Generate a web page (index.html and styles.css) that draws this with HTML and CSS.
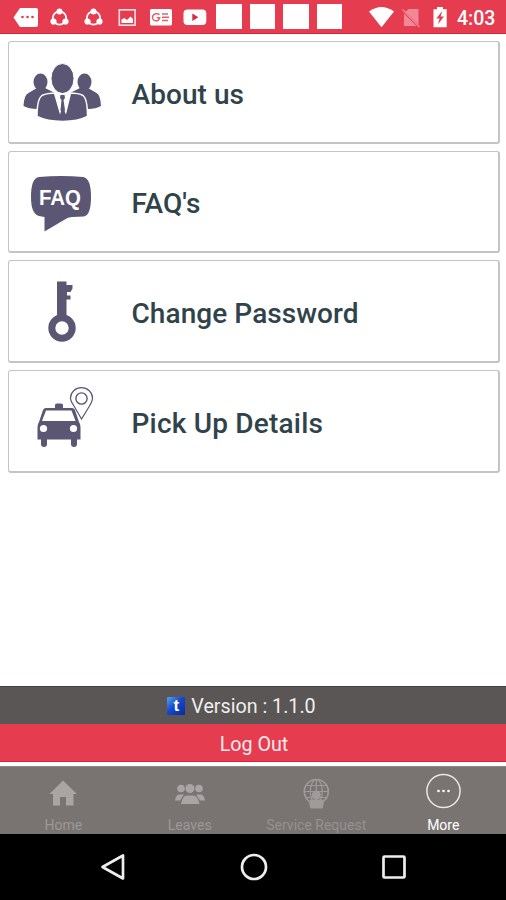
FILE: index.html
```
<!DOCTYPE html>
<html lang="en">
<head>
<meta charset="utf-8">
<title>More</title>
<link rel="stylesheet" href="styles.css">
</head>
<body>
<header class="status">
  <svg width="44" height="34" viewBox="0 0 44 34"><path fill="#fff" d="M20 8H36Q38 8 38 10V25Q38 27 36 27H20L13.5 17.5Z"/><g fill="#e63c50"><circle cx="22.5" cy="17" r="1.3"/><circle cx="27.5" cy="17" r="1.3"/><circle cx="32.5" cy="17" r="1.3"/></g></svg>
  <svg width="33" height="34" viewBox="44 0 33 34"><circle cx="59.5" cy="18" r="6.7" fill="none" stroke="#fff" stroke-width="1.8"/><g fill="#fff"><circle cx="59.5" cy="11.5" r="3"/><circle cx="53.5" cy="21.5" r="3.1"/><circle cx="65.5" cy="21.5" r="3.1"/></g></svg>
  <svg width="34" height="34" viewBox="77 0 34 34"><circle cx="93.5" cy="18" r="6.7" fill="none" stroke="#fff" stroke-width="1.8"/><g fill="#fff"><circle cx="93.5" cy="11.5" r="3"/><circle cx="87.5" cy="21.5" r="3.1"/><circle cx="99.5" cy="21.5" r="3.1"/></g></svg>
  <svg width="32" height="34" viewBox="111 0 32 34"><rect x="119.3" y="9.8" width="15.8" height="15.4" fill="none" stroke="#ffe0e4" stroke-width="1.6"/><path fill="#fff" d="M121.5 23V19.5L124.5 18L127 20L130.5 16.5L133 19V23Z"/></svg>
  <svg width="35" height="34" viewBox="143 0 35 34"><rect x="150" y="9" width="22" height="16.5" rx="1.5" fill="#fff"/><path d="M159.5 14.7Q158 13.5 156.5 13.7A3.6 3.6 0 1 0 159.7 17.7H156.8M162 14H168M162 17.3H169M162 20.6H168" fill="none" stroke="#e4606e" stroke-width="1.5"/></svg>
  <svg width="38" height="34" viewBox="178 0 38 34"><rect x="183.5" y="9.5" width="22.8" height="15.5" rx="4" fill="#fff"/><path fill="#d92a40" d="M192.3 13.5L198.3 17.2L192.3 21Z"/></svg>
  <div class="blocks"><i></i><i></i><i></i><i></i></div>
  <svg class="signals" width="90" height="34" viewBox="364 0 90 34"><path fill="#fff" d="M369 11.5Q381.5 2.5 394 11.5L381.5 27.3Z"/><path fill="#f08995" d="M408.5 9H418.500V24.500L405.5 11.8ZM404 13.5L416.5 26H404Z"/><path d="M402.5 9.5L419.5 27" stroke="#f08995" stroke-width="1.4"/><path fill="#fff" d="M433.5 9.2H437V7H443V9.2H446.7V27.2H433.5Z"/><path fill="#e63c50" d="M442.2 11L436.3 18.6H439.5L438 24.3L444 16.5H440.7Z"/></svg>
  <time>4:03</time>
</header>
<main>
  <a class="card"><svg width="123" height="101" viewBox="9 42 123 101"><g fill="#5b5673"><ellipse cx="40.5" cy="82" rx="7" ry="8.5"/><path d="M37 88H45L57 94V109H37Q29 109 23.5 106Q24 95 28.5 93Z"/><ellipse cx="84.5" cy="82" rx="7" ry="8.5"/><path d="M88 88H80L68 94V109H88Q96 109 101 106Q100.500 95 96.500 93Z"/></g><path fill="#5b5673" stroke="#fff" stroke-width="1.500" d="M37 116.500Q37 99 42 95.500Q47 93 56 93L62.500 97L69 93Q79 93 83 95.500Q87.500 99 87.500 116.500Q78 121.500 62.500 121.500Q47 121.500 37 116.500Z"/><ellipse cx="62.500" cy="78.500" rx="11.500" ry="15" fill="#5b5673" stroke="#fff" stroke-width="1"/><path fill="#fff" d="M54 94H59L62.500 95L66 94H71L66 114.500L62.500 107L60 114.500Z"/><path fill="#5b5673" d="M60.500 95H64.500L65 98L63.500 100L65 110L62.500 116L60.500 110L61.500 100L60 98Z"/></svg><span>About us</span></a>
  <a class="card"><svg width="123" height="100" viewBox="9 152 123 100"><path fill="#5b5673" d="M39 177Q61 175 83 177Q91 178 91 197Q91 215 84 216.500L72 217Q68 217 64 220L44.500 231.500V217L39 216Q31 214 31 197Q31 178 39 177Z"/><text class="faq" x="39" y="204.500" textLength="42" lengthAdjust="spacingAndGlyphs">FAQ</text></svg><span>FAQ's</span></a>
  <a class="card"><svg width="123" height="100" viewBox="9 262 123 100"><path fill="#5b5673" d="M57 281.500H66.500V285H72.500V288.500L70.500 292H67V295.500H70.500V299.500H66.500V317H57Z"/><circle cx="62" cy="328" r="10.200" fill="none" stroke="#5b5673" stroke-width="7"/></svg><span>Change Password</span></a>
  <a class="card"><svg width="123" height="100" viewBox="9 372 123 100"><path fill="#5b5673" d="M55 408V405Q55 403.500 57 403.500H61Q63 403.500 63 405V408H72Q74 408 75 410L79 422Q80.500 424 80.500 427V439.500H77V444Q77 447 74 447Q71 447 71 444V439.500H47V444Q47 447 44 447Q41 447 41 444V439.500H37.500V427Q37.500 424 39 422L43 410Q44 408 46 408Z"/><path fill="#fff" d="M46 410.500H71.500L75.500 421H42Z"/><circle cx="43.500" cy="428.500" r="3.600" fill="#fff"/><circle cx="73.500" cy="428.500" r="3.600" fill="#fff"/><path d="M81.500 419L74 406Q70.500 401 70.500 398A11 10.300 0 0 1 92.500 398Q92.500 401 89.500 406Z" fill="#fff" stroke="#5b5673" stroke-width="1.200"/><circle cx="81.500" cy="398.500" r="5.600" fill="none" stroke="#5b5673" stroke-width="1.400"/></svg><span class="wide">Pick Up Details</span></a>
</main>
<div class="version"><span class="mark">t</span><span>Version : 1.1.0</span></div>
<div class="logout">Log Out</div>
<nav class="tabs">
  <a><svg width="100" height="50" viewBox="13.500 767 100 50"><path fill="#aaa5a4" d="M63.500 780.500L77.500 794H74V805.500H66.500V797H60.500V805.500H53.500V794H50Z"/></svg><span>Home</span></a>
  <a><svg width="100" height="50" viewBox="140 767 100 50"><g fill="#aaa5a4"><circle cx="181" cy="788.500" r="3.800"/><circle cx="190" cy="788.500" r="4.500"/><circle cx="199" cy="788.500" r="3.800"/><path d="M175 800.500Q176 795 179 794.500H184L180 800.500ZM205 800.500Q204 795 201 794.500H196L200 800.500ZM181 804Q182.500 795.500 187 795.500H193Q198 795.500 199.500 804Z"/></g></svg><span>Leaves</span></a>
  <a class="dim"><svg width="100" height="50" viewBox="266.500 767 100 50"><g fill="none" stroke="#a09b9a" stroke-width="1.200"><circle cx="316.800" cy="791.500" r="12" stroke-width="1.700"/><ellipse cx="316.800" cy="791.500" rx="6" ry="12"/><path d="M316.800 779.500V803M305 791.500H329M307 785.500H327M307 797.500H327"/></g><g fill="#a09b9a"><circle cx="316.800" cy="795" r="4.500"/><path d="M311 799.500H323L324.500 803L323 808.500H311L309.500 803Z"/></g></svg><span>Service Request</span></a>
  <a class="active"><svg width="100" height="50" viewBox="393 767 100 50"><circle cx="443.500" cy="791" r="16.600" fill="none" stroke="#e9e7e7" stroke-width="1.500"/><g fill="#fff"><circle cx="438.500" cy="791" r="1.300"/><circle cx="443.500" cy="791" r="1.300"/><circle cx="448.500" cy="791" r="1.300"/></g></svg><span>More</span></a>
</nav>
<footer class="keys">
  <svg width="28" height="30" viewBox="0 0 28 30"><path d="M24 3.500V26.500L3.500 15Z"/></svg>
  <svg width="28" height="30" viewBox="0 0 28 30"><circle cx="14" cy="15" r="12"/></svg>
  <svg width="28" height="30" viewBox="0 0 28 30"><rect x="3.500" y="4.500" width="21" height="21" rx="1"/></svg>
</footer>
</body>
</html>
```
FILE: styles.css
```
* { box-sizing: border-box; }
body { margin: 0; width: 506px; height: 900px; display: flex; flex-direction: column; background: #fff; font-family: Roboto, sans-serif; overflow: hidden; }
svg { display: block; flex: none; }
.status { height: 34px; flex: none; display: flex; align-items: center; background: #e63c50; border-bottom: 1px solid #dc1f3c; color: #fff; }
.blocks { display: flex; gap: 8px; }
.blocks i { width: 25.5px; height: 25px; background: #fff; }
.signals { margin-left: 22px; }
.status time { margin-left: 3px; padding-top: 3px; font-size: 19.5px; font-weight: 500; white-space: nowrap; }
main { flex: 1; padding: 7px 6.5px 0 8px; display: flex; flex-direction: column; gap: 7.2px; }
.card { height: 102.5px; flex: none; display: flex; align-items: center; padding-top: 2px; border: 1px solid #c4c4c4; border-width: 1px 2px 2px 1px; border-radius: 3px; color: #30434b; font-size: 28px; font-weight: 500; }
.card span { padding-top: 3px; margin-left: -0.5px; letter-spacing: 0.07px; white-space: nowrap; }
.card .wide { letter-spacing: 0.2px; }
.faq { font: bold 22px "Liberation Sans", sans-serif; fill: #fff; }
.version { height: 38px; flex: none; display: flex; align-items: center; justify-content: center; gap: 6px; padding: 2px 23px 0 0; background: #5a5655; border-top: 1px solid #454141; color: #eee; font-size: 19.7px; }
.mark { width: 18px; height: 18px; margin-top: -2px; border-radius: 1px; background: linear-gradient(135deg, #54a3f0, #1748c9 45%, #082aa0); color: #fff; font: bold 17px/18px "Liberation Sans", sans-serif; text-align: center; }
.logout { height: 38px; flex: none; display: flex; align-items: center; justify-content: center; padding: 4px 0 0 2px; background: #e63c50; border-bottom: 1px solid #d9213b; color: #ffebed; font-size: 19.7px; }
.tabs { height: 68px; margin-top: 4px; flex: none; display: grid; grid-template-columns: repeat(4, 1fr); background: #797372; border-top: 1px solid #8c8887; color: #9d9897; font-size: 14px; }
.tabs a { display: flex; flex-direction: column; align-items: center; white-space: nowrap; }
.tabs .dim { color: #969190; }
.tabs .active { padding-left: 1px; color: #fff; }
.keys { height: 66px; flex: none; display: flex; justify-content: center; align-items: center; gap: 112.5px; padding-left: 1px; background: #000; }
.keys path, .keys circle, .keys rect { fill: none; stroke: #eee; stroke-width: 2.7; stroke-linejoin: round; }
```
